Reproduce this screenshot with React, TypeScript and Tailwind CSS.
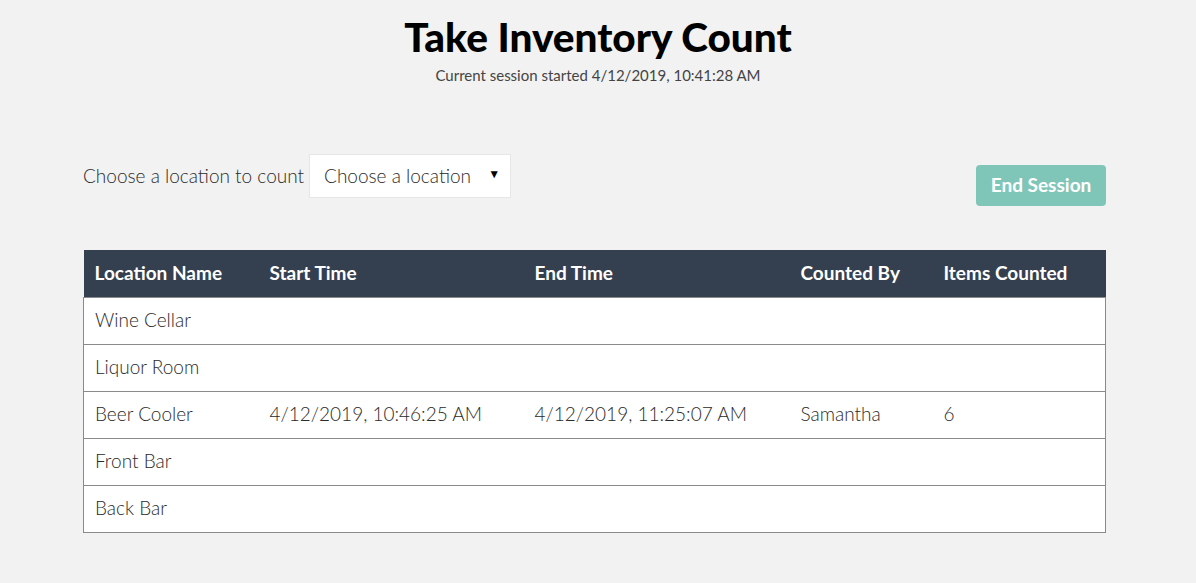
interface CountRow {
  name: string;
  start?: string;
  end?: string;
  countedBy?: string;
  items?: number;
}

const rows: CountRow[] = [
  { name: 'Wine Cellar' },
  { name: 'Liquor Room' },
  {
    name: 'Beer Cooler',
    start: '4/12/2019, 10:46:25 AM',
    end: '4/12/2019, 11:25:07 AM',
    countedBy: 'Samantha',
    items: 6,
  },
  { name: 'Front Bar' },
  { name: 'Back Bar' },
];

const font = { fontFamily: 'Lato, "Noto Sans", sans-serif' };

export default function App() {
  return (
    <div className="min-h-[583px] bg-[#f2f2f2] text-[#2a2a2a]" style={font}>
      <div className="flex flex-col items-center pt-[12px]">
        <h1 className="text-[40.5px] font-black leading-[50px] text-black">Take Inventory Count</h1>
        <p className="mt-[4px] text-[15px] leading-[18px] text-[#444]">Current session started 4/12/2019, 10:41:28 AM</p>
      </div>

      <div className="ml-[83px] mt-[70px] w-[1023px]">
        <div className="flex items-start justify-between">
          <div className="flex items-center gap-[5px]">
            <span className="text-[19px] font-light">Choose a location to count</span>
            <div className="flex h-[44px] w-[202px] items-center justify-between border border-[#e6e6e6] bg-white pl-[14px] pr-[10px]">
              <span className="text-[19px] font-light">Choose a location</span>
              <span className="-mt-[4px] text-[12px] text-black">▼</span>
            </div>
          </div>
          <button className="mt-[11px] h-[41px] w-[130px] rounded-[4px] bg-[#7fc6b8] text-[19px] font-bold text-white">
            End Session
          </button>
        </div>

        <table className="mt-[44px] w-full border-collapse text-left text-[19px]">
          <thead>
            <tr className="h-[47px] bg-[#344050] text-white">
              <th className="w-[175px] pl-[11px] font-bold">Location Name</th>
              <th className="w-[265px] pl-[11px] font-bold">Start Time</th>
              <th className="w-[266px] pl-[11px] font-bold">End Time</th>
              <th className="w-[143px] pl-[11px] font-bold">Counted By</th>
              <th className="pl-[11px] font-bold">Items Counted</th>
            </tr>
          </thead>
          <tbody>
            {rows.map((row) => (
              <tr key={row.name} className="h-[47px] border border-[#8a8a8a] bg-white font-light">
                <td className="pl-[11px]">{row.name}</td>
                <td className="pl-[11px]">{row.start}</td>
                <td className="pl-[11px]">{row.end}</td>
                <td className="pl-[11px]">{row.countedBy}</td>
                <td className="pl-[11px]">{row.items}</td>
              </tr>
            ))}
          </tbody>
        </table>
      </div>
    </div>
  );
}
